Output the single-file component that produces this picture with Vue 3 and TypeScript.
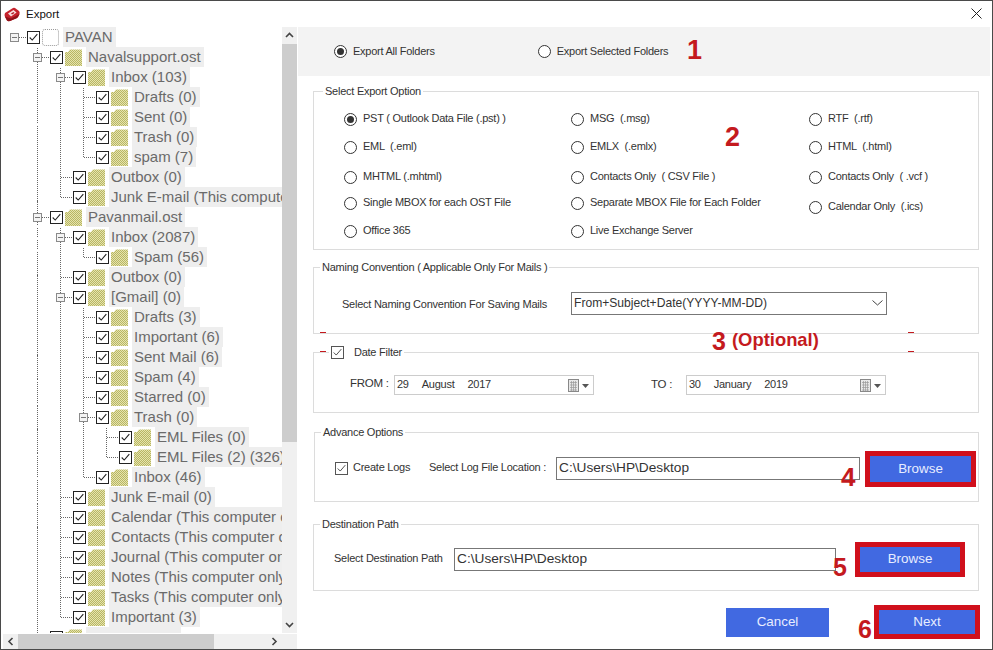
<script setup lang="ts">
interface Row { level: number; name: string; exp?: boolean; blank?: boolean; empty?: boolean }
const rows: Row[] = [
  { level: 0, name: 'PAVAN', exp: true, blank: true },
  { level: 1, name: 'Navalsupport.ost', exp: true },
  { level: 2, name: 'Inbox (103)', exp: true },
  { level: 3, name: 'Drafts (0)' },
  { level: 3, name: 'Sent (0)' },
  { level: 3, name: 'Trash (0)' },
  { level: 3, name: 'spam (7)' },
  { level: 2, name: 'Outbox (0)' },
  { level: 2, name: 'Junk E-mail (This computer only) (0)' },
  { level: 1, name: 'Pavanmail.ost', exp: true },
  { level: 2, name: 'Inbox (2087)', exp: true },
  { level: 3, name: 'Spam (56)' },
  { level: 2, name: 'Outbox (0)' },
  { level: 2, name: '[Gmail] (0)', exp: true },
  { level: 3, name: 'Drafts (3)' },
  { level: 3, name: 'Important (6)' },
  { level: 3, name: 'Sent Mail (6)' },
  { level: 3, name: 'Spam (4)' },
  { level: 3, name: 'Starred (0)' },
  { level: 3, name: 'Trash (0)', exp: true },
  { level: 4, name: 'EML Files (0)' },
  { level: 4, name: 'EML Files (2) (326)' },
  { level: 3, name: 'Inbox (46)' },
  { level: 2, name: 'Junk E-mail (0)' },
  { level: 2, name: 'Calendar (This computer only) (0)' },
  { level: 2, name: 'Contacts (This computer only) (0)' },
  { level: 2, name: 'Journal (This computer only) (0)' },
  { level: 2, name: 'Notes (This computer only) (0)' },
  { level: 2, name: 'Tasks (This computer only) (0)' },
  { level: 2, name: 'Important (3)' },
  { level: 1, name: '', empty: true },
]
const lineX = (l: number) => 11.5 + 23 * l
const rowY = (i: number) => 10.5 + 20 * i
const lines: string[] = []
rows.forEach((r, i) => {
  if (r.level > 0) lines.push(`M${lineX(r.level)} ${rowY(i)}H${lineX(r.level) + 13}`)
  if (r.level === 0) lines.push(`M${lineX(0)} ${rowY(i)}H${lineX(0) + 13}`)
  let last = -1
  for (let j = i + 1; j < rows.length && rows[j].level > r.level; j++) {
    if (rows[j].level === r.level + 1) last = j
  }
  if (last > 0) lines.push(`M${lineX(r.level + 1)} ${rowY(i) + 10}V${rowY(last)}`)
})
const linePath = lines.join('')

const col1 = ['PST ( Outlook Data File (.pst) )', 'EML  (.eml)', 'MHTML (.mhtml)', 'Single MBOX for each OST File', 'Office 365']
const col2 = ['MSG  (.msg)', 'EMLX  (.emlx)', 'Contacts Only  ( CSV File )', 'Separate MBOX File for Each Folder', 'Live Exchange Server']
const col3 = ['RTF  (.rtf)', 'HTML  (.html)', 'Contacts Only  ( .vcf )', 'Calendar Only  (.ics)', '']
const options = col1.flatMap((a, i) => [
  { label: a, on: i === 0, cal: false },
  { label: col2[i], on: false, cal: false },
  { label: col3[i], on: false, cal: i === 3 },
]).filter((o) => o.label)
</script>

<template>
  <div class="window">
    <header class="titlebar">
      <svg class="logo" viewBox="0 0 16 16" width="16" height="16">
        <path d="M1 7 9 2Q10 1.500 11 2L15 5Q16 6 15.500 8L14 11Q13 12 12 12.500L6 15Q4 15.500 3 14.500L1 11Q0 9 1 7Z" fill="#c5222c" />
        <path d="M1 10.500 3 14.500Q4 15.500 6 15L12 12.500Q13 12 14 11L15.500 8 7 12.500Z" fill="#8f1219" />
        <path d="M4 7.500 9.500 4 12.500 6.500 7 10.500Z" fill="#f7dede" />
        <path d="M7 7.500 9.500 6 10.500 7 8 8.500Z" fill="#b01822" />
      </svg>
      <span class="title">Export</span>
      <svg class="close" viewBox="0 0 11 11" width="11" height="11">
        <path d="M.5.500l10 10M10.500.500l-10 10" stroke="#222" stroke-width="1" fill="none" />
      </svg>
    </header>

    <div class="main">
      <aside class="left">
        <div class="tree">
          <svg class="lines" width="279" height="640">
            <path :d="linePath" fill="none" stroke="#666" stroke-dasharray="1 1" shape-rendering="crispEdges" />
          </svg>
          <div v-for="(r, i) in rows" :key="i" class="row" :style="{ paddingLeft: 7 + 23 * r.level + 'px' }">
            <span class="exp" :class="{ hidden: !r.exp }"></span>
            <span class="tcheck">
              <svg v-if="!r.empty" viewBox="0 0 13 13" width="11" height="11"><path d="M2 6.500 5 9.500 11 2.500" fill="none" stroke="#222" stroke-width="1.300" /></svg>
            </span>
            <span v-if="r.blank" class="blank-folder"></span>
            <svg v-else class="folder" viewBox="0 0 17 17" width="17" height="17">
              <defs>
                <pattern :id="'d' + i" width="2" height="2" patternUnits="userSpaceOnUse">
                  <rect width="2" height="2" fill="#e6e4ae" />
                  <rect width="1" height="1" fill="#b8b664" />
                  <rect x="1" y="1" width="1" height="1" fill="#b8b664" />
                </pattern>
              </defs>
              <path d="M0 3H3L5 .5H17V17H0Z" :fill="'url(#d' + i + ')'" />
            </svg>
            <span class="label" :class="{ 'label-empty': r.empty }">{{ r.name }}</span>
          </div>
        </div>
        <div class="vbar">
          <svg class="arrow" viewBox="0 0 15 17" width="15" height="17"><path d="M4 10 7.500 6.500 11 10" fill="none" stroke="#444" stroke-width="1.600" /></svg>
          <div class="vthumb"></div>
          <svg class="arrow arrow-down" viewBox="0 0 15 17" width="15" height="17"><path d="M4 7 7.500 10.500 11 7" fill="none" stroke="#444" stroke-width="1.600" /></svg>
        </div>
        <div class="hbar">
          <svg class="arrow" viewBox="0 0 15 15" width="15" height="15"><path d="M9.500 4 6 7.500 9.500 11" fill="none" stroke="#444" stroke-width="1.600" /></svg>
          <div class="hthumb"></div>
          <svg class="arrow arrow-right" viewBox="0 0 15 15" width="15" height="15"><path d="M5.500 4 9 7.500 5.500 11" fill="none" stroke="#444" stroke-width="1.600" /></svg>
        </div>
        <div class="corner"></div>
      </aside>

      <section class="right">
        <div class="band">
          <label class="opt"><span class="radio on"></span>Export All Folders</label>
          <label class="opt band-second"><span class="radio"></span>Export Selected Folders</label>
        </div>

        <div class="group g-export">
          <span class="legend">Select Export Option</span>
          <div class="grid">
            <label v-for="o in options" :key="o.label" class="opt" :class="{ cal: o.cal }">
              <span class="radio" :class="{ on: o.on }"></span>{{ o.label }}
            </label>
          </div>
        </div>

        <div class="group g-naming">
          <span class="legend legend-tight">Naming Convention ( Applicable Only For Mails )</span>
          <span class="naming-label">Select Naming Convention For Saving Mails</span>
          <div class="select">
            <span>From+Subject+Date(YYYY-MM-DD)</span>
            <svg viewBox="0 0 11 6" width="11" height="6"><path d="M.5.500 5.500 5l5-4.500" fill="none" stroke="#444" /></svg>
          </div>
        </div>

        <div class="group g-date">
          <span class="legend legend-check">
            <span class="check"><svg viewBox="0 0 13 13" width="11" height="11"><path d="M2 6.500 5 9.500 11 2.500" fill="none" stroke="#333" /></svg></span>
            Date Filter
          </span>
          <span class="from">FROM :</span>
          <div class="date">
            <span class="dparts"><span>29</span><span>August</span><span>2017</span></span>
            <svg viewBox="0 0 22 13" width="22" height="13">
              <rect x=".5" y=".5" width="10" height="12" fill="#e8e8e8" stroke="#888" />
              <path d="M2 3.500h7M2 6h7M2 8.500h7M2 11h7M3.500 2v10M5.500 2v10M7.500 2v10" stroke="#999" stroke-width=".7" />
              <path d="M14 5h7l-3.500 4Z" fill="#555" />
            </svg>
          </div>
          <span class="to">TO :</span>
          <div class="date date-to">
            <span class="dparts"><span>30</span><span>January</span><span>2019</span></span>
            <svg viewBox="0 0 22 13" width="22" height="13">
              <rect x=".5" y=".5" width="10" height="12" fill="#e8e8e8" stroke="#888" />
              <path d="M2 3.500h7M2 6h7M2 8.500h7M2 11h7M3.500 2v10M5.500 2v10M7.500 2v10" stroke="#999" stroke-width=".7" />
              <path d="M14 5h7l-3.500 4Z" fill="#555" />
            </svg>
          </div>
        </div>

        <div class="group g-adv">
          <span class="legend legend-adv">Advance Options</span>
          <span class="check"><svg viewBox="0 0 13 13" width="11" height="11"><path d="M2 6.500 5 9.500 11 2.500" fill="none" stroke="#333" /></svg></span>
          <span class="create">Create Logs</span>
          <span class="loc">Select Log File Location :</span>
          <div class="path path-log">C:\Users\HP\Desktop</div>
          <button class="btn btn-red browse-a">Browse</button>
        </div>

        <div class="group g-dest">
          <span class="legend legend-tight">Destination Path</span>
          <span class="dest-label">Select Destination Path</span>
          <div class="path path-dest">C:\Users\HP\Desktop</div>
          <button class="btn btn-red browse-b">Browse</button>
        </div>

        <div class="actions">
          <button class="btn cancel">Cancel</button>
          <button class="btn btn-red next">Next</button>
        </div>
      </section>
    </div>

    <span class="note n1">1</span>
    <span class="note n2">2</span>
    <span class="note n3">3</span>
    <span class="note opt-note">(Optional)</span>
    <span class="note n4">4</span>
    <span class="note n5">5</span>
    <span class="note n6">6</span>
    <i class="tick t1"></i><i class="tick t2"></i><i class="tick t3"></i><i class="tick t4"></i>
  </div>
</template>

<style>
html, body { margin: 0; background: #fff; }
</style>

<style scoped>
.window {
  position: relative;
  width: 993px;
  height: 650px;
  box-sizing: border-box;
  border: 1px solid #4a4a4a;
  background: #fff;
  overflow: hidden;
  font-family: "Liberation Sans", Arial, sans-serif;
  font-size: 11px;
  color: #333;
  display: flex;
  flex-direction: column;
}
.titlebar {
  height: 25px;
  flex: none;
  display: flex;
  align-items: center;
  padding: 0 10px 1px 3px;
}
.logo { flex: none; }
.title {
  margin-left: 6px;
  font-size: 11.500px;
  color: #111;
}
.close { margin-left: auto; }
.main { flex: 1; display: flex; min-height: 0; }

.left {
  width: 297px;
  flex: none;
  padding-left: 2px;
  box-sizing: border-box;
  display: grid;
  grid-template-columns: 279px 15px;
  grid-template-rows: 606px 15px;
  row-gap: 1px;
}
.tree {
  position: relative;
  overflow: hidden;
  font-size: 15px;
  color: #6a6a6a;
}
.lines { position: absolute; left: 0; top: 0; }
.row {
  position: relative;
  height: 20px;
  display: flex;
  align-items: center;
  white-space: nowrap;
  width: max-content;
}
.exp {
  width: 9px;
  height: 9px;
  box-sizing: border-box;
  border: 1px solid #8a8a8a;
  background: linear-gradient(#777, #777) center / 5px 1px no-repeat #f4f4f4;
  margin-right: 8px;
  flex: none;
}
.exp.hidden { visibility: hidden; }
.tcheck {
  width: 13px;
  height: 13px;
  box-sizing: border-box;
  border: 1px solid #222;
  background: #fff;
  margin-right: 2px;
  display: flex;
  flex: none;
}
.folder { margin-right: 4px; flex: none; }
.blank-folder {
  width: 17px;
  height: 17px;
  box-sizing: border-box;
  border: 1px dotted #999;
  border-radius: 3px;
  margin-right: 4px;
  background: #fff;
  flex: none;
}
.label {
  background: #eeeeee;
  height: 20px;
  line-height: 20px;
  padding: 0 3px 0 2px;
}
.label-empty { display: block; width: 90px; }

.vbar {
  background: #f0f0f0;
  display: flex;
  flex-direction: column;
}
.arrow { flex: none; display: block; }
.vthumb { height: 398px; background: #cdcdcd; flex: none; }
.arrow-down { margin-top: auto; }
.hbar {
  background: #f0f0f0;
  display: flex;
}
.hthumb { width: 196px; background: #cdcdcd; flex: none; }
.arrow-right { margin-left: auto; }
.corner { background: #f0f0f0; }

.right { flex: 1; min-width: 0; letter-spacing: -0.25px; }
.band {
  height: 49px;
  background: #f3f3f3;
  display: flex;
  align-items: center;
  padding-left: 36px;
  margin-right: 2px;
}
.band-second { margin-left: 103px; }
.opt {
  display: flex;
  align-items: center;
  height: 20px;
  box-sizing: border-box;
  padding-bottom: 2px;
  white-space: pre;
}
.radio {
  width: 13px;
  height: 13px;
  box-sizing: border-box;
  border: 1px solid #333;
  border-radius: 50%;
  background: #fff;
  margin: 2px 6px 0 0;
  flex: none;
  position: relative;
}
.radio.on::after {
  content: "";
  position: absolute;
  inset: 2px;
  border-radius: 50%;
  background: #333;
}
.group {
  position: relative;
  box-sizing: border-box;
  width: 666px;
  margin-left: 15px;
  border: 1px solid #dcdcdc;
}
.legend {
  position: absolute;
  top: -8px;
  left: 9px;
  background: #fff;
  padding: 0 2px;
  line-height: 15px;
  white-space: nowrap;
}
.legend-tight { left: 6px; }
.legend-adv { left: 6px; }
.legend-check {
  left: 15px;
  display: flex;
  align-items: center;
  top: -8px;
}
.legend-check .check { margin-right: 10px; }
.check {
  width: 13px;
  height: 13px;
  box-sizing: border-box;
  border: 1px solid #555;
  background: #fff;
  display: flex;
  flex: none;
}
.g-export { margin-top: 15px; height: 159px; padding: 17px 0 0 30px; }
.grid {
  display: grid;
  grid-template-columns: 227px 238px 1fr;
  grid-template-rows: 28px 30px 26px 28px 20px;
}
.cal { margin-top: 4px; }
.g-naming {
  margin-top: 17px;
  height: 67px;
  display: flex;
  align-items: flex-start;
  padding: 24px 0 0 28px;
}
.naming-label { margin-top: 6px; width: 229px; flex: none; white-space: nowrap; }
.select {
  width: 316px;
  height: 23px;
  box-sizing: border-box;
  border: 1px solid #777;
  display: flex;
  align-items: center;
  justify-content: space-between;
  padding: 0 3px 1px 2px;
  font-size: 12.100px;
  letter-spacing: 0;
  color: #333;
}
.g-date {
  margin-top: 18px;
  height: 61px;
  display: flex;
  align-items: flex-start;
  padding: 22px 0 0 36px;
}
.from { width: 44px; flex: none; font-size: 11.500px; margin-top: 2px; }
.to { width: 35px; flex: none; margin: 3px 0 0 57px; font-size: 11.500px; }
.date {
  width: 200px;
  height: 20px;
  box-sizing: border-box;
  border: 1px solid #cccccc;
  display: flex;
  align-items: center;
  justify-content: space-between;
  padding: 0 3px 0 2px;
  flex: none;
}
.dparts { display: flex; gap: 13px; margin-bottom: 2px; }
.g-adv {
  margin: 19px 0 0 16px;
  width: 665px;
  height: 70px;
  display: flex;
  align-items: flex-start;
  padding: 24px 0 0 20px;
}
.g-adv > .check { margin-top: 5px; }
.create { margin: 4px 0 0 5px; width: 76px; flex: none; }
.loc { margin-top: 4px; width: 127px; flex: none; white-space: nowrap; }
.path {
  height: 23px;
  box-sizing: border-box;
  border: 1px solid #777;
  padding-left: 2px;
  line-height: 19px;
  font-size: 13.700px;
  letter-spacing: 0;
  color: #333;
  flex: none;
}
.path-log { width: 304px; }
.btn {
  border: none;
  background: #4169e1;
  color: #e8edff;
  font-family: "Liberation Sans", Arial, sans-serif;
  font-size: 13.400px;
  letter-spacing: 0;
  padding: 0 0 2px;
  box-sizing: border-box;
}
.btn-red { border: 5px solid #d0101c; }
.browse-a { width: 111px; height: 36px; margin: -6px 0 0 5px; }
.g-dest {
  margin-top: 22px;
  height: 67px;
  display: flex;
  align-items: flex-start;
  padding: 23px 0 0 20px;
}
.dest-label { margin-top: 4px; width: 120px; flex: none; white-space: nowrap; }
.path-dest { width: 382px; }
.browse-b { width: 110px; height: 35px; margin: -6px 0 0 19px; }
.actions {
  margin: 14px 0 0 0;
  display: flex;
  align-items: center;
  padding-left: 428px;
}
.cancel { width: 103px; height: 29px; }
.next { width: 106px; height: 34px; margin-left: 45px; }

.note {
  position: absolute;
  color: #c41a1e;
  font-weight: 700;
  font-size: 26px;
  line-height: 1;
}
.n1 { left: 686px; top: 36px; font-size: 27px; }
.n2 { left: 724px; top: 123px; font-size: 27px; }
.n3 { left: 711px; top: 328px; font-size: 25px; }
.opt-note {
  left: 731px;
  top: 330px;
  font-size: 18.400px;
}
.n4 { left: 840px; top: 463px; }
.n5 { left: 832px; top: 554px; font-size: 25px; }
.n6 { left: 857px; top: 616px; font-size: 25px; }
.tick {
  position: absolute;
  width: 6px;
  height: 1px;
  background: #c41a1e;
}
.t1 { left: 319px; top: 331px; }
.t2 { left: 319px; top: 350px; }
.t3 { left: 907px; top: 331px; }
.t4 { left: 907px; top: 350px; }
</style>
